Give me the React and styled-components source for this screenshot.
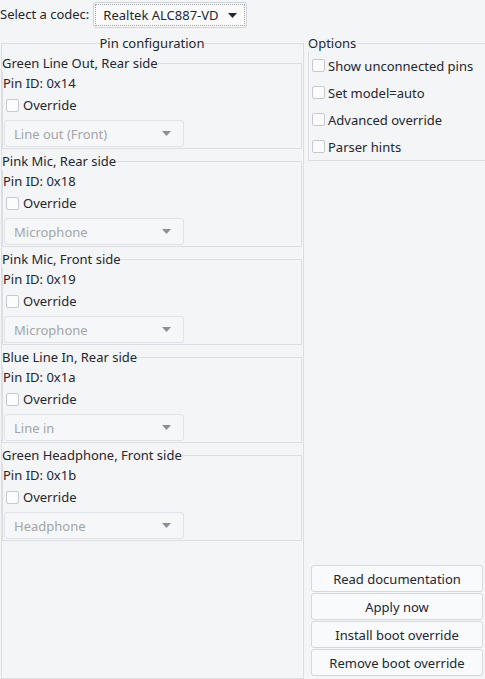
import styled, {createGlobalStyle} from 'styled-components'

const Global = createGlobalStyle`
  html, body {
    margin: 0;
    padding: 0;
    background: #f4f5f7;
  }
  body {
    font-family: "Noto Sans", "DejaVu Sans", sans-serif;
    font-size: 13px;
    color: #232631;
  }
`

const Window = styled.div`
  width: 485px;
  height: 679px;
  overflow: hidden;
  display: flex;
  flex-direction: column;
`

const TopBar = styled.div`
  height: 34px;
  display: flex;
  align-items: flex-start;
  gap: 4px;
  flex-shrink: 0;
`

const Label = styled.span`
  line-height: 28px;
`

const CodecCombo = styled.div`
  margin-top: 2px;
  height: 26px;
  width: 154px;
  box-sizing: border-box;
  border: 1px solid #cfd2d7;
  border-radius: 3px;
  background: #fbfbfc;
  outline: 1px dotted #9ea2a8;
  outline-offset: -3px;
  display: flex;
  align-items: center;
  justify-content: space-between;
  padding: 0 9px 0 9px;
`

const Main = styled.div`
  flex: 1;
  display: flex;
  min-height: 0;
`

const Group = styled.fieldset`
  margin: 0;
  padding: 0;
  border: 1px solid #dcdee2;
  min-width: 0;
`

const Title = styled.legend`
  padding: 0;
  line-height: 18px;
  margin: ${p => (p.$center ? '0 auto' : '0 0 0 -1px')};
`

const PinGroup = styled(Group)`
  margin-left: 1px;
  width: 303px;
  box-sizing: border-box;
  padding-right: 1px;
`

const PinList = styled.div`
  display: flex;
  flex-direction: column;
  gap: 3px;
  padding-top: 2px;
`

const PinBox = styled(Group)``

const PinId = styled.div`
  line-height: 22px;
`

const CheckRow = styled.label`
  display: flex;
  align-items: center;
  height: ${p => p.$h || 22}px;
  gap: ${p => p.$gap || 4}px;
  padding-left: 3px;
`

const Box = styled.span`
  width: 13px;
  height: 13px;
  box-sizing: border-box;
  border: 1px solid #c6c9ce;
  border-radius: 2px;
  background: #fcfcfd;
  flex-shrink: 0;
`

const DisabledCombo = styled.div`
  margin: 4px 0 1px 1px;
  width: 180px;
  height: 27px;
  box-sizing: border-box;
  border: 1px solid #e0e2e5;
  border-radius: 3px;
  background: #f6f7f8;
  color: #a2a5ab;
  display: flex;
  align-items: center;
  justify-content: space-between;
  padding: 0 12px 0 9px;
`

const Side = styled.div`
  width: 177px;
  margin-left: 4px;
  display: flex;
  flex-direction: column;
`

const OptionsGroup = styled(Group)`
  width: 200px;
  box-sizing: border-box;
`

const Buttons = styled.div`
  margin-top: auto;
  display: flex;
  flex-direction: column;
  gap: 1px;
  padding: 0 2px 3px 3px;
`

const Button = styled.button`
  height: 27px;
  box-sizing: border-box;
  border: 1px solid #d5d8dc;
  border-radius: 3px;
  background: #f9fafb;
  font-family: inherit;
  font-size: 13px;
  color: inherit;
  padding: 0;
`

const Arrow = ({color = '#232631'}) => (
  <svg width="9" height="5" viewBox="0 0 9 5">
    <polygon points="0,0 9,0 4.5,5" fill={color} />
  </svg>
)

const pins = [
  {name: 'Green Line Out, Rear side', id: '0x14', type: 'Line out (Front)'},
  {name: 'Pink Mic, Rear side', id: '0x18', type: 'Microphone'},
  {name: 'Pink Mic, Front side', id: '0x19', type: 'Microphone'},
  {name: 'Blue Line In, Rear side', id: '0x1a', type: 'Line in'},
  {name: 'Green Headphone, Front side', id: '0x1b', type: 'Headphone'},
]

const options = ['Show unconnected pins', 'Set model=auto', 'Advanced override', 'Parser hints']

const actions = ['Read documentation', 'Apply now', 'Install boot override', 'Remove boot override']

function App() {
  return (
    <Window>
      <Global />
      <TopBar>
        <Label>Select a codec:</Label>
        <CodecCombo>
          <span>Realtek ALC887-VD</span>
          <Arrow />
        </CodecCombo>
      </TopBar>
      <Main>
        <PinGroup>
          <Title $center>Pin configuration</Title>
          <PinList>
            {pins.map(pin => (
              <PinBox key={pin.id}>
                <Title>{pin.name}</Title>
                <PinId>Pin ID: {pin.id}</PinId>
                <CheckRow>
                  <Box />
                  Override
                </CheckRow>
                <DisabledCombo>
                  <span>{pin.type}</span>
                  <Arrow color="#8c8f94" />
                </DisabledCombo>
              </PinBox>
            ))}
          </PinList>
        </PinGroup>
        <Side>
          <OptionsGroup>
            <Title>Options</Title>
            {options.map(opt => (
              <CheckRow key={opt} $h={27} $gap={3}>
                <Box />
                {opt}
              </CheckRow>
            ))}
          </OptionsGroup>
          <Buttons>
            {actions.map(a => (
              <Button key={a}>{a}</Button>
            ))}
          </Buttons>
        </Side>
      </Main>
    </Window>
  )
}

export default App
